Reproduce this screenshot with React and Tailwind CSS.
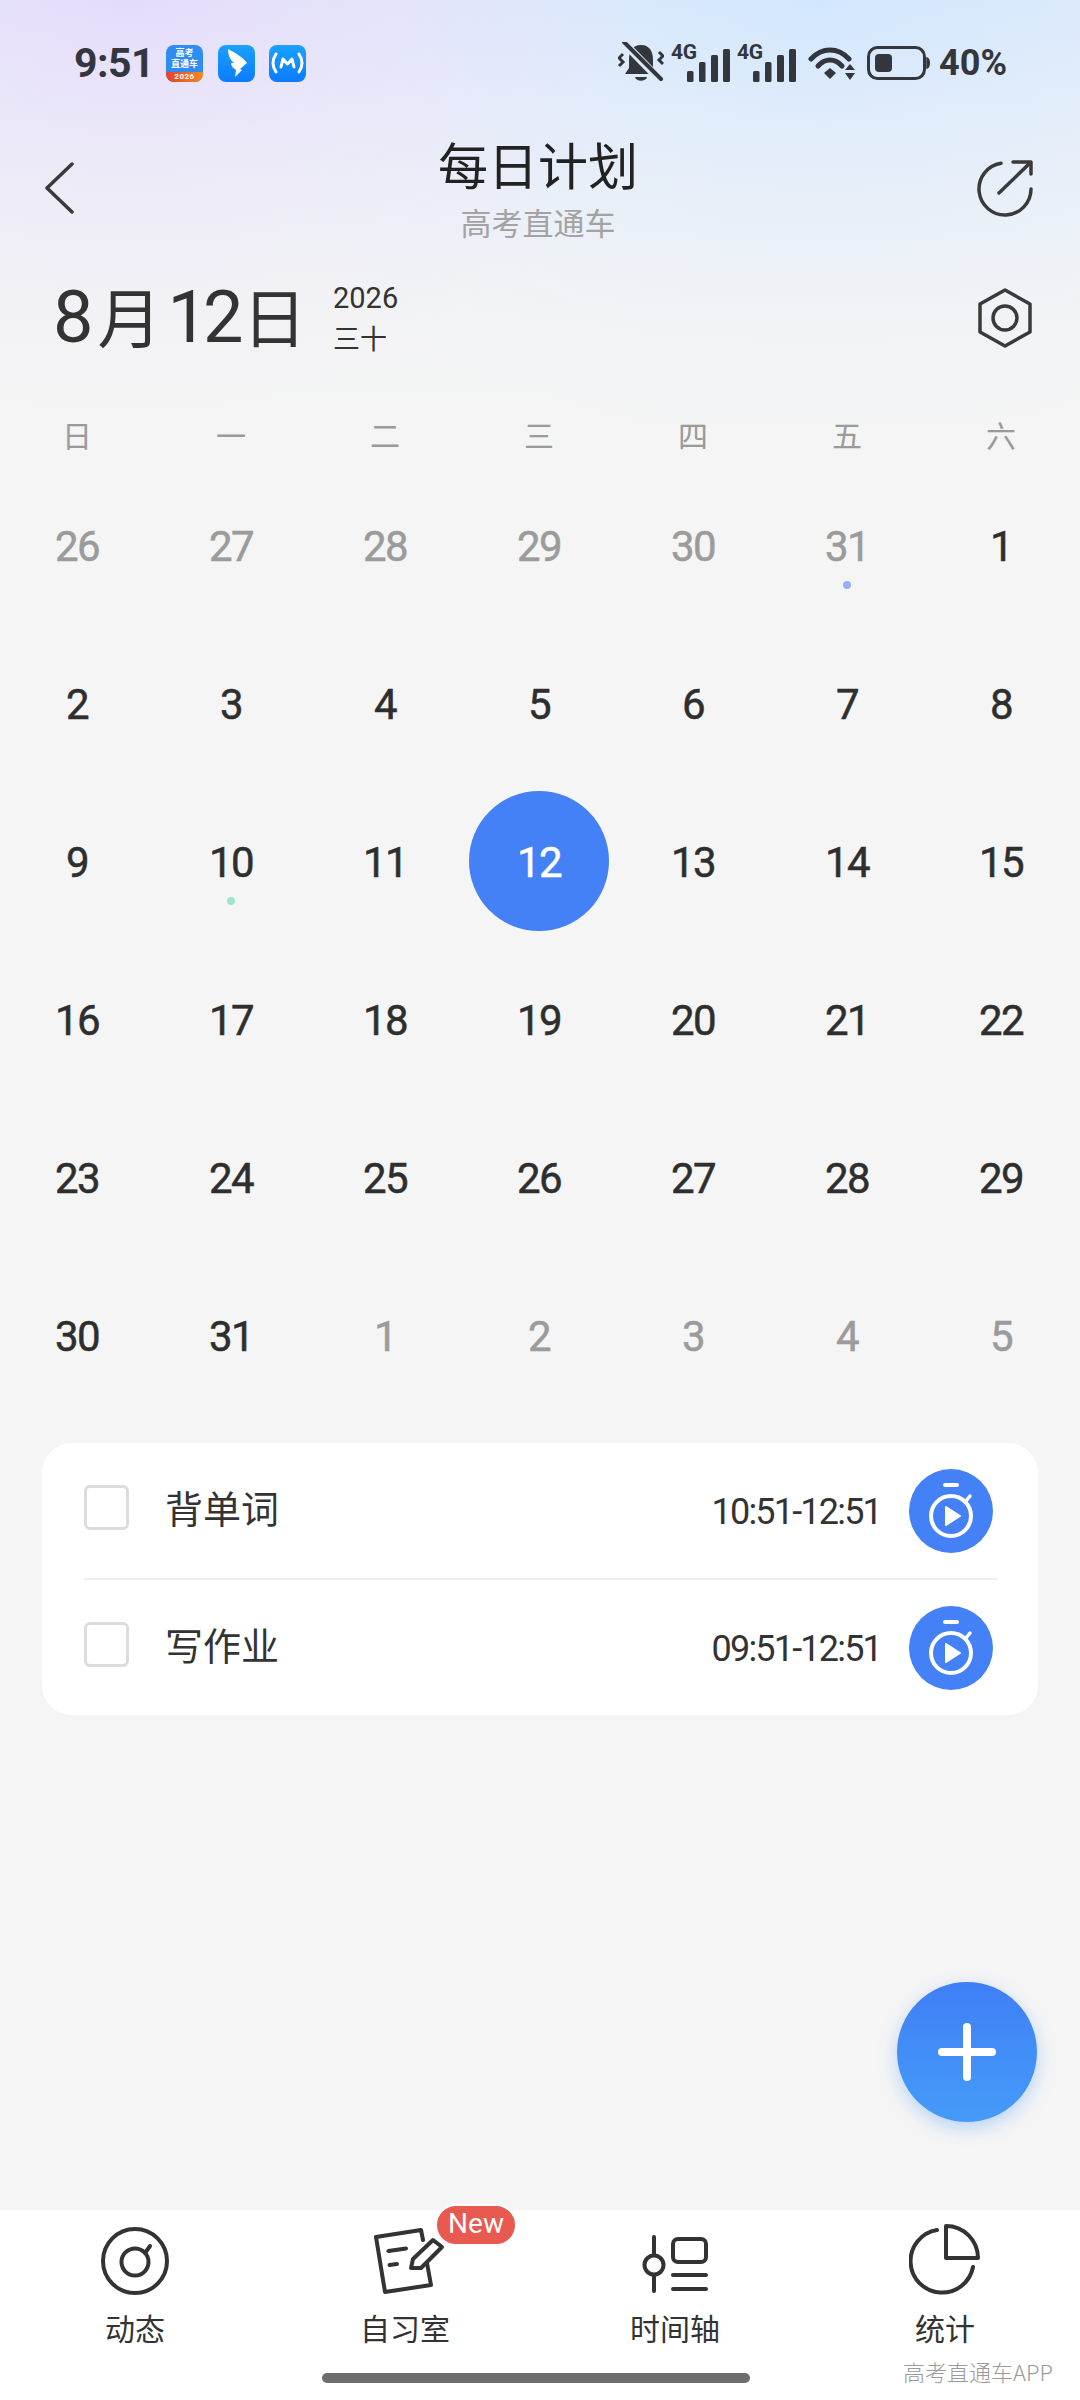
const CJK = "font-['Noto_Sans_CJK_SC',sans-serif]";
const NUM = "font-['Roboto','Noto_Sans_CJK_SC',sans-serif]";

const WEEK = ["日", "一", "二", "三", "四", "五", "六"];

// 6 rows, gray = other month
const GRID = [
  ...[26, 27, 28, 29, 30, 31].map((d) => ({ d, gray: true, dot: d === 31 ? "blue" : null })),
  ...Array.from({ length: 31 }, (_, i) => ({ d: i + 1, dot: i === 9 ? "green" : null })),
  ...[1, 2, 3, 4, 5].map((d) => ({ d, gray: true })),
];

function Bars() {
  return (
    <svg width="43" height="33" viewBox="0 0 43 33" className="absolute left-0 bottom-0" fill="#33373d">
      <rect x="0" y="22" width="6.5" height="11" rx="1.5" />
      <rect x="12" y="13" width="6.5" height="20" rx="1.5" />
      <rect x="24" y="6" width="7" height="27" rx="1.5" />
      <rect x="36" y="0" width="7" height="33" rx="1.5" />
    </svg>
  );
}

function Signal() {
  return (
    <div className="relative w-[59px] h-[38px]">
      <span className="absolute left-0 -top-[3px] text-[21px] leading-[22px] font-bold text-[#33373d] font-['Roboto',sans-serif] tracking-[-0.5px]">4G</span>
      <div className="absolute right-0 bottom-0 w-[43px] h-[33px]">
        <Bars />
      </div>
    </div>
  );
}

function StatusBar() {
  return (
    <div className="h-[126px] flex items-center justify-between pl-[74px] pr-[73px]">
      <div className="flex items-center">
        <span className="text-[41px] leading-none font-bold text-[#33373d] font-['Roboto',sans-serif] tracking-[-0.5px] w-[92px]">9:51</span>
        <div className="w-[37px] h-[37px] rounded-[8px] overflow-hidden bg-[#2f8cf0] flex flex-col items-center text-white font-bold">
          <span className={`${CJK} text-[9px] leading-[11px] mt-[2px]`}>高考</span>
          <span className={`${CJK} text-[9px] leading-[11px]`}>直通车</span>
          <span className="mt-auto w-full h-[10px] bg-[linear-gradient(90deg,#e8402a,#f58a1f)] text-[8px] leading-[10px] text-center font-['Roboto',sans-serif] tracking-[0.5px]">2026</span>
        </div>
        <div className="ml-[15px] w-[37px] h-[37px] rounded-[8px] bg-[linear-gradient(180deg,#1aa2ff,#0b7bff)] flex items-center justify-center">
          <svg width="24" height="30" viewBox="0 0 24 30" fill="#fff">
            <path d="M3 1 C10 5 18 9 22 15 L15 21 L17 22 L10 29 L11 22 C8 20 6 18 6 15 L9 15 C5 12 3 7 3 1Z" />
          </svg>
        </div>
        <div className="ml-[14px] w-[37px] h-[37px] rounded-[8px] bg-[linear-gradient(180deg,#1aa2ff,#0b7bff)] flex items-center justify-center">
          <svg width="33" height="24" viewBox="0 0 33 24" fill="none" stroke="#fff" strokeWidth="3" strokeLinecap="round" strokeLinejoin="round">
            <path d="M5 3 C1 9 1 15 5 21" />
            <path d="M28 3 C32 9 32 15 28 21" />
            <path d="M10 16 L12 8 L16.500 13 L21 8 L23 16" />
          </svg>
        </div>
      </div>
      <div className="flex items-center">
        <svg width="46" height="42" viewBox="0 0 46 42" fill="none" className="mr-[7px]">
          <path d="M23 3 C14 3 11 10 11 18 L11 26 L7 32 L39 32 L35 26 L35 18 C35 10 32 3 23 3Z" fill="#33373d" />
          <path d="M17 35 H29 C28 40 18 40 17 35Z" fill="#33373d" />
          <path d="M6 1 L42 38" stroke="#dbe9f8" strokeWidth="8" />
          <path d="M6 0 L43 37" stroke="#33373d" strokeWidth="4" strokeLinecap="round" />
          <path d="M5 12 L1 16 L5 20 L1 24" stroke="#33373d" strokeWidth="3" />
          <path d="M41 10 L45 14 L41 18 L45 22" stroke="#33373d" strokeWidth="3" />
        </svg>
        <Signal />
        <div className="ml-[7px]">
          <Signal />
        </div>
        <svg width="47" height="34" viewBox="0 0 47 34" fill="none" className="ml-[12px]">
          <path d="M3 13 C14 1 30 1 41 13" stroke="#33373d" strokeWidth="5" strokeLinecap="round" />
          <path d="M10 20 C17 12 27 12 34 20" stroke="#33373d" strokeWidth="5" strokeLinecap="round" />
          <path d="M16 27 L22 22 L28 27 L22 33Z" fill="#33373d" />
          <path d="M42 18 L47 24 H37Z" fill="#33373d" />
          <path d="M42 34 L47 27 H37Z" fill="#33373d" />
        </svg>
        <svg width="64" height="34" viewBox="0 0 64 34" fill="none" className="ml-[12px]">
          <rect x="1.500" y="1.500" width="56" height="31" rx="9" stroke="#33373d" strokeWidth="3" />
          <rect x="8" y="8" width="17" height="18" rx="4" fill="#33373d" />
          <path d="M60 12 C63 13 63 21 60 22Z" fill="#33373d" stroke="#33373d" strokeWidth="1.500" />
        </svg>
        <span className="ml-[8px] text-[36px] leading-none font-bold text-[#33373d] font-['Roboto',sans-serif]">40%</span>
      </div>
    </div>
  );
}

function Header() {
  return (
    <div className="h-[124px] grid grid-cols-[1fr_auto_1fr] items-start pl-[45px] pr-[47px]">
      <svg width="30" height="52" viewBox="0 0 30 52" fill="none" className="mt-[36px]" stroke="#3a3a3a" strokeWidth="3.500" strokeLinecap="round" strokeLinejoin="round">
        <path d="M27 2 L2 26 L27 50" />
      </svg>
      <div className="flex flex-col items-center mt-[7px] -translate-x-[1px]">
        <span className={`${CJK} text-[50px] leading-[60px] text-[#222]`}>每日计划</span>
        <span className={`${CJK} text-[31px] leading-[36px] mt-[11px] text-[#a3a3a3]`}>高考直通车</span>
      </div>
      <svg width="56" height="58" viewBox="0 0 56 58" fill="none" className="mt-[34px] justify-self-end" stroke="#3a3a3a" strokeWidth="3.500" strokeLinecap="round" strokeLinejoin="round">
        <path d="M24 3.300 A26 26 0 1 0 54 29" />
        <path d="M36 2 H54 V14" />
        <path d="M22 33 L53 3" />
      </svg>
    </div>
  );
}

function DateRow() {
  return (
    <div className="h-[156px] flex items-center justify-between pl-[53px] pr-[47px] pb-[20px]">
      <div className="flex items-center">
        <div className="w-[280px] whitespace-nowrap text-[#333] flex items-center">
          <span className={`${NUM} text-[72px] leading-none`}>8</span>
          <span className={`${CJK} text-[64px] leading-none ml-[4px] -translate-y-[4px]`}>月</span>
          <span className={`${NUM} text-[72px] leading-none ml-[6px] tracking-[-5px]`}>12</span>
          <span className={`${CJK} text-[64px] leading-none ml-[4px] -translate-y-[4px]`}>日</span>
        </div>
        <div className="flex flex-col">
          <span className={`${NUM} text-[29px] leading-[36px] text-[#333]`}>2026</span>
          <span className={`${CJK} text-[27px] leading-[36px] mt-[4px] text-[#333]`}>三十</span>
        </div>
      </div>
      <svg width="56" height="60" viewBox="0 0 56 60" fill="none" stroke="#3a3a3a" strokeWidth="3.500" strokeLinejoin="round">
        <path d="M28 2 L53 16 V44 L28 58 L3 44 V16Z" />
        <circle cx="28" cy="30" r="12" />
      </svg>
    </div>
  );
}

function Calendar() {
  return (
    <div className="pr-[2px]">
      <div className="grid grid-cols-7 h-[60px] items-center">
        {WEEK.map((w) => (
          <span key={w} className={`${CJK} text-[30px] leading-none text-center text-[#9a9a9a] -translate-y-[2px]`}>{w}</span>
        ))}
      </div>
      <div className="grid grid-cols-7 auto-rows-[158px]">
        {GRID.map((c, i) => {
          const selected = !c.gray && c.d === 12;
          return (
            <div key={i} className="relative flex items-center justify-center">
              {selected && <div className="absolute w-[140px] h-[140px] rounded-full bg-[#4480f6]" />}
              <span
                className={`${NUM} relative translate-y-[2px] text-[42px] leading-none tracking-[-1.5px] [-webkit-text-stroke:0.5px_currentColor] ${
                  selected ? "text-white" : c.gray ? "text-[#9b9b9b]" : "text-[#2e2e2e]"
                }`}
              >
                {c.d}
              </span>
              {c.dot === "blue" && <div className="absolute left-1/2 -translate-x-1/2 top-[115px] w-[8px] h-[8px] rounded-full bg-[#8fb4f7]" />}
              {c.dot === "green" && <div className="absolute left-1/2 -translate-x-1/2 top-[115px] w-[8px] h-[8px] rounded-full bg-[#a0e5cb]" />}
            </div>
          );
        })}
      </div>
    </div>
  );
}

function Stopwatch() {
  return (
    <div className="shrink-0 w-[84px] h-[84px] rounded-full bg-[#4480f6] flex items-center justify-center">
      <svg width="84" height="84" viewBox="0 0 84 84" fill="none" stroke="#fff" strokeWidth="4" strokeLinecap="round">
        <circle cx="42" cy="47" r="20" />
        <path d="M36 16 H48" strokeWidth="4" />
        <path d="M57 32 L61 27" strokeWidth="3.500" />
        <path d="M37 38 L51 47 L37 56Z" fill="#fff" stroke="#fff" strokeWidth="2" strokeLinejoin="round" />
      </svg>
    </div>
  );
}

function TaskRow({ title, time }) {
  return (
    <div className="h-[135px] flex items-center pr-[45px]">
      <div className="w-[45px] h-[45px] rounded-[6px] border-[3px] border-[#dcdcdc] bg-white -translate-y-[3px]" />
      <span className={`${CJK} ml-[36px] text-[38px] leading-none text-[#333] -translate-y-[4px]`}>{title}</span>
      <span className={`${NUM} ml-auto mr-[28px] text-[36px] leading-none text-[#333] tracking-[-1.8px] translate-y-[1px]`}>{time}</span>
      <Stopwatch />
    </div>
  );
}

function TaskCard() {
  return (
    <div className="mt-[29px] mx-[42px] rounded-[30px] bg-white pl-[42px]">
      <TaskRow title="背单词" time="10:51-12:51" />
      <div className="h-[2px] mr-[41px] bg-[#efefef]" />
      <TaskRow title="写作业" time="09:51-12:51" />
    </div>
  );
}

function NavItem({ label, children }) {
  return (
    <div className="relative flex flex-col items-center">
      <div className="h-[91px] flex items-end justify-center pb-[6px]">{children}</div>
      <span className={`${CJK} mt-[8px] text-[30px] leading-[36px] text-[#333]`}>{label}</span>
    </div>
  );
}

function BottomNav() {
  return (
    <div className="relative mt-auto h-[190px] bg-white">
      <div className="grid grid-cols-4">
        <NavItem label="动态">
          <svg width="68" height="68" viewBox="0 0 68 68" fill="none" stroke="#333" strokeWidth="4" strokeLinecap="round">
            <circle cx="34" cy="34" r="32" />
            <circle cx="34" cy="35" r="13.500" />
            <path d="M44 26 L49 19" />
          </svg>
        </NavItem>
        <NavItem label="自习室">
          <div className="relative translate-x-[4px]">
            <svg width="72" height="68" viewBox="0 0 72 68" fill="none" stroke="#333" strokeWidth="4" strokeLinecap="round" strokeLinejoin="round">
              <path d="M50 13 L48 3 L3 10 L12 65 L58 58 L54 36" />
              <path d="M60 13 L69 20 L48 41 H38 L40 32Z" />
              <path d="M15.500 24 L33 21.500" />
              <path d="M16.500 38 L24 37" />
            </svg>
            <span className="absolute left-[62px] -top-[23px] w-[82px] h-[42px] rounded-full border-[2px] border-white bg-[#e85a50] text-white text-[28px] leading-[36px] text-center font-['Roboto',sans-serif]">New</span>
          </div>
        </NavItem>
        <NavItem label="时间轴">
          <svg width="66" height="60" viewBox="2 0 66 60" fill="none" stroke="#333" strokeWidth="4" strokeLinecap="round">
            <path d="M14 2 V20" />
            <path d="M14 40 V56" />
            <circle cx="14" cy="30" r="9.500" />
            <rect x="33" y="4" width="33" height="23" rx="5" />
            <path d="M33 40 H66" />
            <path d="M33 54 H66" />
          </svg>
        </NavItem>
        <NavItem label="统计">
          <svg width="72" height="72" viewBox="1 1 72 72" fill="none" stroke="#333" strokeWidth="4" strokeLinecap="round" strokeLinejoin="round">
            <path d="M38 4 V36 H70 A32 32 0 0 0 38 4Z" />
            <path d="M29 8 A31.500 31.500 0 1 0 65 45" />
          </svg>
        </NavItem>
      </div>
      <span className={`${CJK} absolute left-[903px] top-[148px] text-[22px] leading-[26px] font-light text-[#9a9a9a] whitespace-nowrap`}>高考直通车APP</span>
      <div className="absolute left-[322px] top-[163px] w-[428px] h-[10px] rounded-full bg-[#6d6d6d]" />
    </div>
  );
}

export default function App() {
  return (
    <div className="relative w-[1080px] min-h-[2400px] flex flex-col bg-[#f5f5f5] overflow-hidden">
      <div className="absolute inset-x-0 top-0 h-[560px] bg-[linear-gradient(180deg,rgba(245,245,245,0)_0%,#f5f5f5_88%),radial-gradient(ellipse_520px_420px_at_130px_0px,#e5dcfc,transparent),radial-gradient(ellipse_620px_460px_at_820px_0px,#d2e7fe,transparent),linear-gradient(180deg,#e8edf8,#f5f5f5)]" />
      <div className="relative flex flex-col flex-1">
        <StatusBar />
        <Header />
        <DateRow />
        <Calendar />
        <TaskCard />
        <BottomNav />
      </div>
      <div className="absolute left-[897px] top-[1982px] w-[140px] h-[140px] rounded-full bg-[linear-gradient(180deg,#3f7ff6,#459bf9)] shadow-[0_6px_18px_rgba(70,150,250,0.35)] flex items-center justify-center">
        <svg width="58" height="58" viewBox="0 0 58 58" stroke="#fff" strokeWidth="8" strokeLinecap="round">
          <path d="M29 4 V54" />
          <path d="M4 29 H54" />
        </svg>
      </div>
    </div>
  );
}
